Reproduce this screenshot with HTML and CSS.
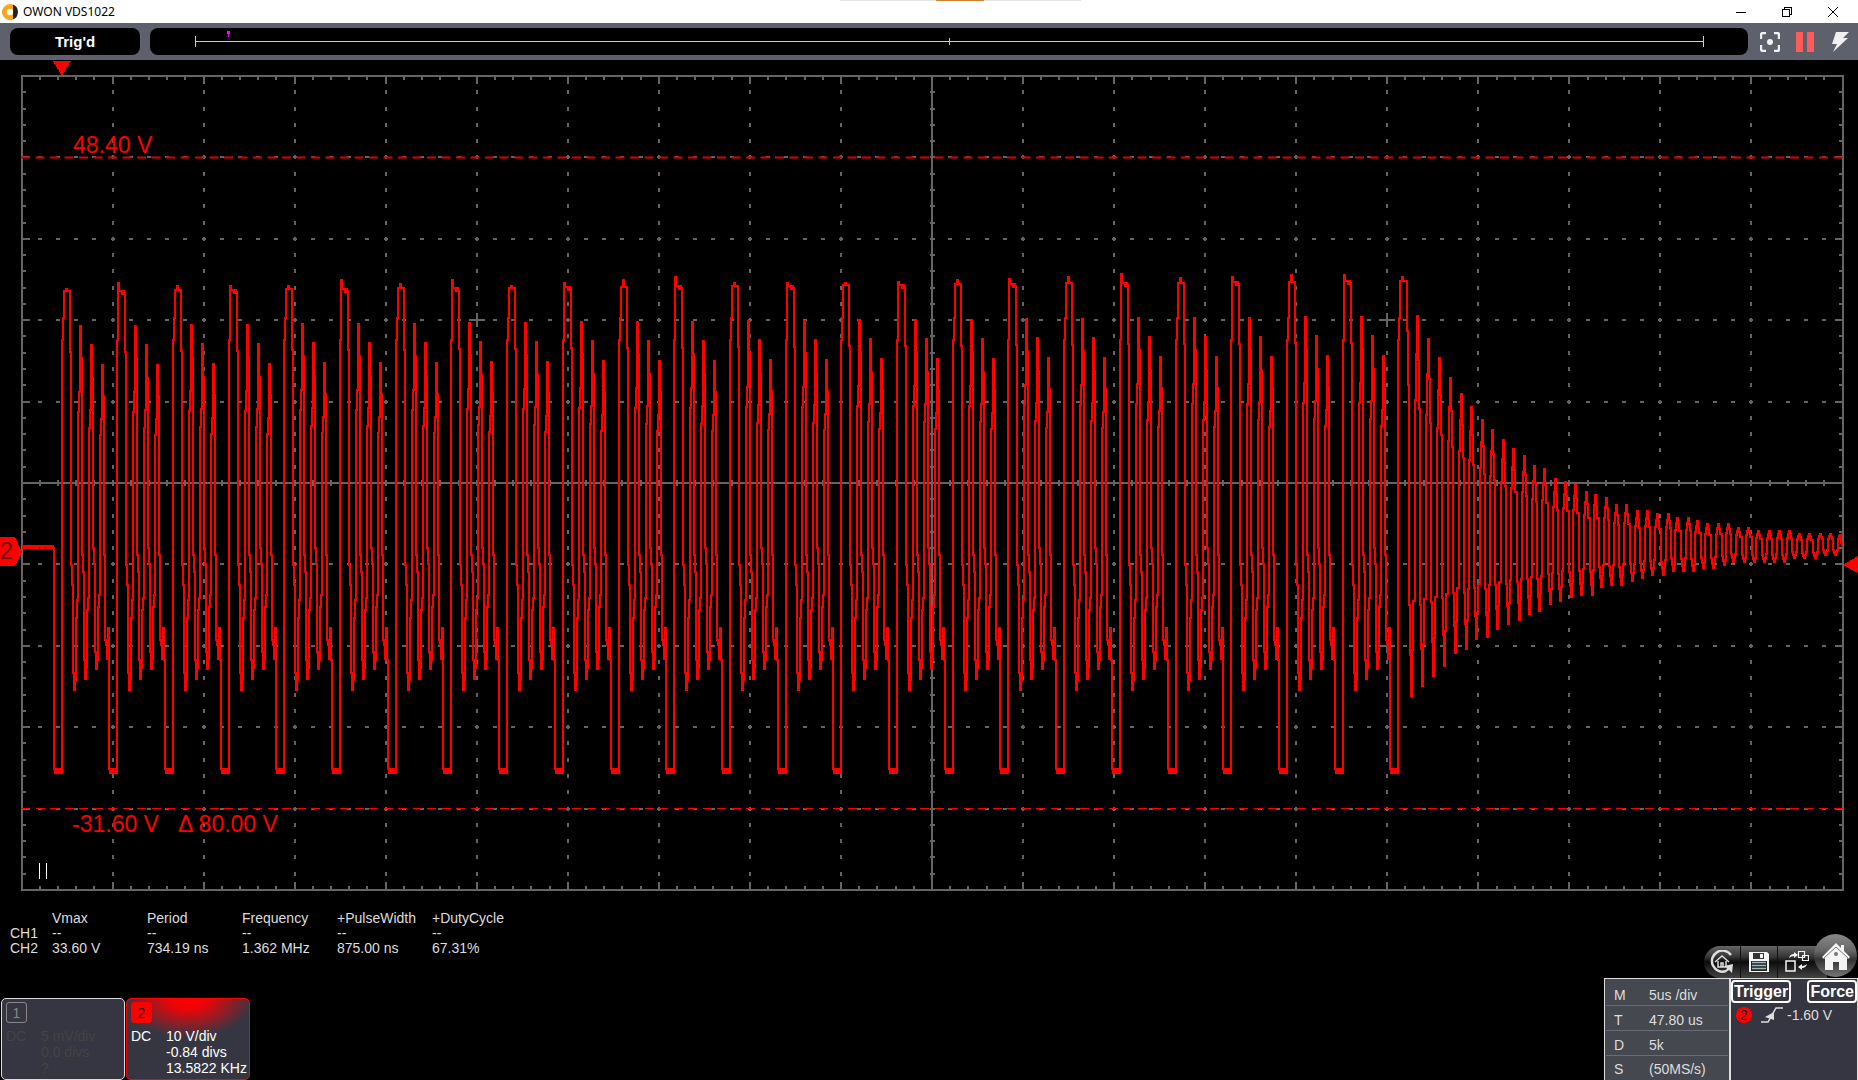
FILE: index.html
```html
<!DOCTYPE html>
<html lang="en">
<head>
    <meta charset="UTF-8">
    <meta name="viewport" content="width=device-width, initial-scale=1.0">
    <title>OWON VDS1022</title>
    <link rel="stylesheet" href="styles.css">
</head>
<body>
<header class="titlebar">
    <svg class="logo" viewBox="0 0 16 16">
        <path d="M8 0a8 8 0 1 0 3 15.4V.6A8 8 0 0 0 8 0z" fill="#faa61a"/>
        <path d="M11 .6a8 8 0 0 1 0 14.8z" fill="#222"/>
        <circle cx="8" cy="8" r="3.2" fill="#fff"/>
    </svg>
    <h1>OWON VDS1022</h1>
    <div class="drag-handle"></div>
    <div class="window-buttons">
        <button aria-label="Minimize"><svg viewBox="0 0 10 10"><path d="M0 5.5h10"/></svg></button>
        <button aria-label="Restore"><svg viewBox="0 0 10 10"><path d="M.5 2.5h7v7h-7zM2.5 2.5v-2h7v7h-2"/></svg></button>
        <button aria-label="Close"><svg viewBox="0 0 10 10"><path d="M0 0l10 10M10 0L0 10" shape-rendering="auto"/></svg></button>
    </div>
</header>

<div class="topbar">
    <div class="status">Trig'd</div>
    <div class="memory">
        <svg viewBox="0 0 1598 27" preserveAspectRatio="none">
            <path d="M45.5 8v11M1553.5 8v11M45 13.5h1508" stroke="#ccc"/>
            <path d="M799.5 10v7" stroke="#fc0"/>
            <path d="M77 3h3v3h-1v3h-1V6h-1z" fill="#f0f"/>
        </svg>
    </div>
    <button aria-label="Auto set">
        <svg viewBox="0 0 20 20"><path d="M1 7V3q0-2 2-2h3M14 1h3q2 0 2 2v4M19 13v4q0 2-2 2h-3M6 19H3q-2 0-2-2v-4" fill="none" stroke="#f0f0f0" stroke-width="2.4"/><circle cx="10" cy="10" r="3" fill="#f0f0f0"/></svg>
    </button>
    <button aria-label="Pause">
        <svg viewBox="0 0 20 20"><path d="M1 0h7v20H1zM12 0h7v20h-7z" fill="#ff5b5b"/></svg>
    </button>
    <button aria-label="Single">
        <svg viewBox="0 0 20 20"><path d="M6 0h13l-6 6h5L3 20l4-8H2z" fill="#f0f0f0"/></svg>
    </button>
</div>

<main class="scope">
    <svg class="screen" viewBox="0 60 1858 845" preserveAspectRatio="none">
        <g id="grid"></g>
        <path id="wave" class="wave"/>
        <path class="cursor cursor-soft" d="M21 157.5h1823"/>
        <path class="cursor" d="M21 808.5h1823"/>
        <path class="pause-mark" d="M39.5 863v16M46.5 863v16"/>
        <path class="marker" d="M53 61h18l-9 15z"/>
        <path class="marker" d="M0 537h15l7 15-7 14H0z"/>
        <path class="marker" d="M1858 556v17l-15-8z"/>
    </svg>
    <span class="label label-top">48.40 V</span>
    <span class="label label-bottom">-31.60 V &nbsp; Δ 80.00 V</span>
    <span class="label label-channel">2</span>
</main>

<footer class="footer">
    <div class="left">
        <table class="measures">
            <tr><td></td><th>Vmax</th><th>Period</th><th>Frequency</th><th>+PulseWidth</th><th>+DutyCycle</th></tr>
            <tr><th>CH1</th><td>--</td><td>--</td><td>--</td><td>--</td><td>--</td></tr>
            <tr><th>CH2</th><td>33.60 V</td><td>734.19 ns</td><td>1.362 MHz</td><td>875.00 ns</td><td>67.31%</td></tr>
        </table>
        <div class="channels">
            <section class="channel channel-off">
                <button class="badge">1</button>
                <div class="channel-data">
                    <span>DC</span>
                    <span>5 mV/div<br>0.0 divs<br>?</span>
                </div>
            </section>
            <section class="channel channel-on">
                <button class="badge">2</button>
                <div class="channel-data">
                    <span>DC</span>
                    <span>10 V/div<br>-0.84 divs<br>13.5822 KHz</span>
                </div>
            </section>
        </div>
    </div>

    <div class="right">
        <nav class="tools">
            <div class="tool-strip">
                <button aria-label="Default settings">
                    <svg viewBox="0 0 24 24" fill="none" stroke="#ddd">
                        <path d="M21 5A10.500 10.500 0 1 0 16 21" stroke-width="2.500"/>
                        <path d="M23 14l-1 9-3-3q-3 3-7 2 4-1 5-4l-3-2z" fill="#ddd" stroke="none"/>
                        <path d="M5 12l7-6 7 6M8 11v6h8v-6M11 17v-4h2v4" stroke-width="1.500"/>
                    </svg>
                </button>
                <button aria-label="Save">
                    <svg viewBox="0 0 24 24">
                        <path d="M2 2h18l2 2v18H2z" fill="#f4f4f4"/>
                        <path d="M6 3h11v6H6z" fill="#333"/><path d="M13 4h3v4h-3z" fill="#f4f4f4"/>
                        <path d="M4 11h16v10H4z" fill="#222"/>
                        <path d="M5 12.500h14M5 15.500h14M5 18.500h14" stroke="#9fb4c0" stroke-width="1.500"/>
                    </svg>
                </button>
                <button aria-label="Switch view">
                    <svg viewBox="0 0 24 24" fill="none" stroke="#f4f4f4">
                        <path d="M1 11h9v10H1z" stroke-width="1.500"/>
                        <path d="M13.500 1.500h6v6h-6zM17.500 5.500h6v5h-6z" stroke-width="1.200"/>
                        <path d="M4 8q1-4 5-4V2l4 3-4 3V6Q6 6 4 8z" fill="#f4f4f4" stroke="none"/>
                        <path d="M22 14q-1 4-5 4v2l-4-3 4-3v2q3 0 5-2z" fill="#f4f4f4" stroke="none"/>
                    </svg>
                </button>
            </div>
            <button class="home" aria-label="Home">
                <svg viewBox="0 0 28 28"><path d="M14 1l5 5V3h3v6l6 6-2 2-1-1v12h-8v-8h-6v8H3V16l-1 1-2-2z" fill="#f4f4f4"/><path d="M2 16L14 5l12 11" fill="none" stroke="#777"/><circle cx="14" cy="12" r="2" fill="#777"/></svg>
            </button>
        </nav>
        <div class="panels">
            <dl class="timebase">
                <div><dt>M</dt><dd>5us /div</dd></div>
                <div><dt>T</dt><dd>47.80 us</dd></div>
                <div><dt>D</dt><dd>5k</dd></div>
                <div><dt>S</dt><dd>(50MS/s)</dd></div>
            </dl>
            <section class="trigger">
                <div class="trigger-buttons">
                    <button>Trigger</button>
                    <button>Force</button>
                </div>
                <div class="trigger-data">
                    <span class="source">2</span>
                    <svg viewBox="0 0 22 16" fill="none" stroke="#ddd"><path d="M0 15h7l8-14h7" stroke-width="1.500"/><path d="M4 10l9-5v8z" fill="#ddd" stroke="none"/></svg>
                    <span>-1.60 V</span>
                </div>
            </section>
        </div>
    </div>
</footer>

<script src="scope.js"></script>
</body>
</html>
```
FILE: styles.css
```css
* {
    box-sizing: border-box;
}
body {
    margin: 0;
    height: 100vh;
    display: flex;
    flex-direction: column;
    overflow: hidden;
    background: #000;
    color: #ddd;
    font-family: "Liberation Sans", Arial, sans-serif;
    font-size: 14px;
}
button {
    margin: 0;
    padding: 0;
    border: 0;
    background: none;
    font-family: inherit;
    color: inherit;
}
svg {
    display: block;
}

/* title bar */
.titlebar {
    position: relative;
    display: flex;
    align-items: center;
    height: 23px;
    padding-left: 2px;
    background: #fff;
    color: #000;
}
.logo {
    width: 16px;
    height: 16px;
}
.titlebar h1 {
    margin: 0 auto 0 5px;
    font: 12px "Noto Sans", "Open Sans", sans-serif;
}
.drag-handle {
    position: absolute;
    top: 0;
    left: 50%;
    width: 241px;
    height: 1px;
    margin-left: -89px;
    background: linear-gradient(90deg, #e5e5e5 96px, #d08030 96px, #d08030 144px, #e5e5e5 144px);
}
.window-buttons {
    display: flex;
    height: 20px;
    padding-right: 2px;
}
.window-buttons button {
    width: 46px;
    display: flex;
    align-items: center;
    justify-content: center;
}
.window-buttons svg {
    width: 10px;
    height: 10px;
    fill: none;
    stroke: #000;
    shape-rendering: crispEdges;
}

/* acquisition bar */
.topbar {
    display: flex;
    align-items: center;
    height: 37px;
    padding: 0 8px 0 10px;
    background: #5e616c;
}
.status, .memory {
    height: 27px;
    border-radius: 8px;
    background: #000;
}
.status {
    width: 130px;
    margin-right: 10px;
    line-height: 27px;
    text-align: center;
    font-size: 15px;
    font-weight: bold;
    color: #fff;
}
.memory {
    flex: 1;
    margin-right: 12px;
}
.memory svg {
    width: 100%;
    height: 27px;
    fill: none;
    shape-rendering: crispEdges;
}
.topbar button + button {
    margin-left: 15px;
}
.topbar button svg {
    width: 20px;
    height: 20px;
}

/* scope screen */
.scope {
    position: relative;
    flex: 1;
    min-height: 0;
}
.screen {
    width: 100%;
    height: 100%;
    fill: none;
    shape-rendering: crispEdges;
}
.grid-line {
    fill: none;
    stroke: #646464;
    stroke-width: 2;
}
.wave {
    stroke: #f00;
    stroke-width: 2;
}
.cursor {
    stroke: #f00;
    stroke-dasharray: 9 5.500;
}
.cursor-soft {
    stroke: #e00000;
    stroke-width: 2;
    shape-rendering: auto;
}
.pause-mark {
    stroke: #fff;
}
.marker {
    fill: #f00;
}
.label {
    position: absolute;
    font-size: 23px;
    line-height: 26px;
    color: #f00;
}
.label-top {
    left: 73px;
    top: 8.500%;
}
.label-bottom {
    left: 72px;
    bottom: 8%;
}
.label-channel {
    left: 0;
    top: 56.600%;
    color: #600;
}

/* bottom area */
.footer {
    display: flex;
    justify-content: space-between;
    padding-top: 5px;
}
.left {
    display: flex;
    flex-direction: column;
    justify-content: space-between;
}
.measures {
    margin: 1px 0 0 10px;
    border-collapse: collapse;
    line-height: 15px;
}
.measures th, .measures td {
    width: 95px;
    padding: 0;
    text-align: left;
    font-weight: normal;
    white-space: nowrap;
}
.measures tr > :first-child {
    width: 42px;
}
.channels {
    display: flex;
    gap: 1px;
    padding-left: 1px;
}
.channel {
    width: 124px;
    height: 82px;
    padding: 3px 0 0 4px;
    border: 1px solid #ddd;
    border-radius: 5px;
    background: #353642;
}
.channel-on {
    border-color: #f00;
    background: radial-gradient(ellipse 66px 38px at 50% 0, #f00 0, #e8050a 30%, #353642 100%) #353642;
    color: #fff;
}
.badge {
    display: block;
    width: 21px;
    height: 21px;
    border: 1px solid #888;
    border-radius: 3px;
    font-size: 14px;
    color: #888;
}
.channel-on .badge {
    border-color: #f00;
    background: #f00;
    color: #200;
}
.channel-data {
    display: flex;
    margin-top: 5px;
    line-height: 16px;
    white-space: nowrap;
}
.channel-data span:first-child {
    width: 35px;
}
.channel-off .channel-data {
    color: #444;
}

.right {
    padding-top: 24px;
}
.tools {
    display: flex;
    align-items: flex-end;
    justify-content: flex-end;
    height: 44px;
    padding-right: 1px;
}
.tool-strip {
    display: flex;
    height: 32px;
    padding-right: 12px;
    margin-right: -13px;
    border-radius: 16px 0 0 16px;
    background: linear-gradient(#666, #333 35%, #0c0c0c 50%, #444);
}
.tool-strip button {
    width: 37px;
    display: flex;
    align-items: center;
    justify-content: center;
    border-right: 1px solid #111;
}
.tool-strip button:last-child {
    border: 0;
}
.tool-strip svg {
    width: 24px;
    height: 24px;
}
.home {
    position: relative;
    width: 43px;
    height: 43px;
    margin-bottom: 1px;
    border-radius: 50%;
    background: linear-gradient(#888, #666 40%, #333 60%, #777);
}
.home svg {
    width: 28px;
    height: 28px;
    margin: 0 auto;
}
.panels {
    display: flex;
    border-top: 1px solid #ddd;
    border-left: 1px solid #ddd;
}
.timebase {
    width: 126px;
    margin: 0;
    padding: 2px 1px 0;
    border-right: 2px solid #ddd;
    background: #464850;
}
.timebase div {
    display: flex;
    height: 25px;
    padding-left: 8px;
    line-height: 28px;
    border-bottom: 1px solid #6a6c74;
}
.timebase div:last-child {
    height: 24px;
    border: 0;
    line-height: 26px;
}
.timebase dt {
    width: 35px;
}
.timebase dd {
    margin: 0;
}
.trigger {
    width: 127px;
    padding: 1px 0 0;
    border-right: 1px solid #ddd;
    background: #353642;
}
.trigger-buttons {
    display: flex;
    justify-content: space-between;
}
.trigger-buttons button {
    height: 23px;
    padding: 0 1px;
    border: 2px solid #fff;
    border-radius: 4px;
    font-size: 16px;
    font-weight: bold;
    line-height: 18px;
    color: #fff;
}
.trigger-data {
    display: flex;
    align-items: center;
    padding: 4px 5px;
}
.trigger-data svg {
    width: 22px;
    height: 16px;
    margin: 0 4px 0 9px;
}
.source {
    width: 16px;
    height: 16px;
    border-radius: 50%;
    background: #f00;
    color: #000;
    line-height: 16px;
    text-align: center;
}
```
FILE: scope.js
```js
// screen area, 20 x 10 divisions
const left = 22, right = 1843, top_ = 76, bottom = 890;
const divX = (right - left) / 20;
const divY = (bottom - top_) / 10;
const midX = left + divX * 10;
const midY = top_ + divY * 5;

function hline(x, y, w) {
    return `M${Math.floor(x)} ${Math.round(y)}h${w}`;
}

function vline(x, y, h) {
    return `M${Math.floor(x)} ${Math.round(y)}v${h}`;
}

function drawGrid() {
    let d = `M${left} ${top_}H${right}V${bottom}H${left}Z`;
    d += `M${Math.floor(midX)} ${top_}V${bottom}M${left} ${midY}H${right}`;

    // columns
    for (let i = 1; i < 20; i++) {
        const x = left + i * divX;
        d += vline(x, top_, 8) + vline(x, bottom - 8, 8);
        for (let k = 1; k < 50; k++) {
            d += vline(x, top_ + k * divY / 5 - 2, 4);
        }
    }
    // rows
    for (let j = 1; j < 10; j++) {
        const y = top_ + j * divY;
        d += hline(left, y, 8) + hline(right - 8, y, 8);
        for (let k = 1; k < 100; k++) {
            d += hline(left + k * divX / 5 - 2, y, 4);
        }
    }
    // small ticks on the frame and on both axes
    for (let k = 1; k < 100; k++) {
        const x = left + k * divX / 5;
        d += vline(x, top_, 4) + vline(x, bottom - 4, 4) + vline(x, midY - 3, 6);
    }
    for (let k = 1; k < 50; k++) {
        const y = top_ + k * divY / 5;
        d += hline(left, y, 4) + hline(right - 4, y, 4) + hline(midX - 2, y, 5);
    }
    // crosses
    for (const i of [5, 15]) {
        for (const j of [3, 7]) {
            d += hline(left + i * divX - 8, top_ + j * divY, 16);
            d += vline(left + i * divX, top_ + j * divY - 7, 14);
        }
    }
    document.getElementById('grid').innerHTML = `<path class="grid-line" d="${d}"/>`;
}

// one burst period: x offset, y
const head = [
    [0, 769], [1, 773], [2, 769], [3, 773], [4, 769], [5, 773], [6, 769], [7, 773],
    [8, 769], [8, 340], [9, 318]
];
const ring = [
    [16, 352], [17, 565], [18, 585], [19, 673], [20, 690], [21, 680], [22, 618], [23, 600],
    [24, 412], [25, 392], [26, 326], [27, 358], [28, 555], [29, 572], [30, 660], [31, 679],
    [32, 668], [33, 610], [34, 598], [35, 428], [36, 410], [37, 345], [38, 378], [39, 548],
    [40, 564], [41, 652], [42, 669], [43, 660], [44, 607], [45, 595], [46, 435], [47, 419],
    [48, 365], [49, 396], [50, 555], [51, 640], [52, 645], [53, 659], [54, 628], [55, 660]
];
// highest sample of every pulse
const spikes = [289, 283, 286, 286, 286, 280, 284, 280, 286, 283, 280, 277, 283,
    283, 283, 282, 280, 279, 277, 274, 278, 277, 275, 275, 277];

// ringing after the last pulse: x, y of each extreme
const decay = [
    [1406, 281], [1411, 696], [1417, 316], [1422, 686], [1428, 339], [1433, 676], [1439, 358],
    [1444, 666], [1450, 378], [1455, 653], [1461, 394], [1466, 649], [1471, 407], [1476, 639],
    [1482, 420], [1487, 637], [1492, 430], [1497, 629], [1503, 440], [1508, 624], [1513, 449],
    [1519, 620], [1524, 456], [1529, 614], [1534, 466], [1539, 611], [1544, 469], [1550, 604],
    [1555, 479], [1560, 601], [1565, 482], [1571, 597], [1575, 485], [1581, 595], [1586, 492],
    [1592, 595], [1595, 495], [1601, 587], [1606, 498], [1611, 585], [1616, 505], [1621, 585],
    [1626, 505], [1632, 581], [1637, 511], [1642, 578], [1647, 511], [1652, 575], [1657, 514],
    [1663, 575], [1668, 514], [1673, 571], [1677, 518], [1683, 571], [1688, 518], [1693, 571],
    [1697, 521], [1703, 568], [1707, 524], [1713, 568], [1718, 524], [1724, 565], [1728, 524],
    [1733, 562], [1738, 528], [1744, 562], [1748, 528], [1754, 562], [1758, 531], [1764, 562],
    [1769, 531], [1774, 562], [1779, 531], [1784, 562], [1789, 531], [1794, 558], [1799, 534],
    [1804, 558], [1809, 534], [1815, 558], [1820, 534], [1825, 555], [1830, 534], [1835, 555],
    [1840, 534], [1842, 546]
];

function drawWave() {
    const points = [];
    for (let x = 22; x < 54; x++) {
        points.push([x, x % 2 && x !== 39 && x !== 45 ? 548 : 546]);
    }

    spikes.forEach((spike, n) => {
        const x0 = Math.floor(54 + n * 55.7);
        const flat = 291 - n * 0.42;
        const lift = n * 0.4;
        head.forEach(([x, y]) => points.push([x0 + x, y]));
        if (n % 2) {
            points.push([x0 + 9, spike], [x0 + 10, flat], [x0 + 13, flat + 3], [x0 + 14, flat], [x0 + 15, flat + 2]);
        } else {
            points.push([x0 + 10, flat], [x0 + 12, spike], [x0 + 13, flat], [x0 + 15, flat]);
        }
        if (n < spikes.length - 1) {
            ring.forEach(([x, y]) => points.push([x0 + x, y < 500 ? y - lift : y]));
        }
    });

    for (let i = 1; i < decay.length; i++) {
        const [x1, y1] = decay[i - 1];
        const [x2, y2] = decay[i];
        for (const [t, v] of [[0.2, 0.12], [0.4, 0.25], [0.6, 0.78], [0.8, 0.9], [1, 1]]) {
            points.push([x1 + (x2 - x1) * t, y1 + (y2 - y1) * v]);
        }
    }

    // every sample is held for its whole column
    let d = `M${points[0][0]} ${points[0][1]}`;
    for (const [x, y] of points) {
        d += `H${Math.round(x)}V${Math.round(y)}`;
    }
    document.getElementById('wave').setAttribute('d', d);
}

drawGrid();
drawWave();
```
